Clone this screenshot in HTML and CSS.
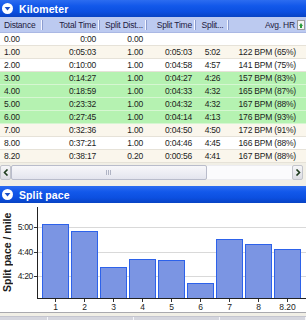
FILE: index.html
```html
<!DOCTYPE html>
<html>
	<head>
		<meta charset="UTF-8">
		<title>Kilometer</title>
		<link rel="stylesheet" href="styles.css">
	</head>
	<body>
		<div class="bar">
			<svg class="toggle" width="11" height="11" viewBox="0 0 11 11"><circle cx="5.5" cy="5.5" r="5.5" fill="#fff"/><path d="M2.6 4 L8.4 4 L5.5 7.6 Z" fill="#1a4fc8"/></svg>
			<span>Kilometer</span>
		</div>

		<table class="splits">
			<colgroup>
				<col style="width:43px"><col style="width:57px"><col style="width:47px">
				<col style="width:49px"><col style="width:33px"><col style="width:77px">
			</colgroup>
			<thead>
				<tr>
					<th class="l">Distance</th>
					<th>Total Time</th>
					<th>Split Dist...</th>
					<th>Split Time</th>
					<th class="c">Split...</th>
					<th class="hr">Avg. HR<svg class="cols" width="8" height="10" viewBox="0 0 8 10"><rect x="0.5" y="0.5" width="7" height="9" fill="#f4f4f4" stroke="#9a9a9a"/><path d="M2 6 L4 3 L6 6 Z" fill="#2c9c3c"/><rect x="3" y="5.5" width="2" height="2.5" fill="#2c9c3c"/></svg></th>
				</tr>
			</thead>
			<tbody>
				<tr><td class="l">0.00</td><td>0:00</td><td>0.00</td><td></td><td class="c"></td><td class="hr"></td></tr>
				<tr class="alt"><td class="l">1.00</td><td>0:05:03</td><td>1.00</td><td>0:05:03</td><td class="c">5:02</td><td class="hr">122 BPM (65%)</td></tr>
				<tr><td class="l">2.00</td><td>0:10:00</td><td>1.00</td><td>0:04:58</td><td class="c">4:57</td><td class="hr">141 BPM (75%)</td></tr>
				<tr class="fast"><td class="l">3.00</td><td>0:14:27</td><td>1.00</td><td>0:04:27</td><td class="c">4:26</td><td class="hr">157 BPM (83%)</td></tr>
				<tr class="fast"><td class="l">4.00</td><td>0:18:59</td><td>1.00</td><td>0:04:33</td><td class="c">4:32</td><td class="hr">165 BPM (87%)</td></tr>
				<tr class="fast"><td class="l">5.00</td><td>0:23:32</td><td>1.00</td><td>0:04:32</td><td class="c">4:32</td><td class="hr">167 BPM (88%)</td></tr>
				<tr class="fast"><td class="l">6.00</td><td>0:27:45</td><td>1.00</td><td>0:04:14</td><td class="c">4:13</td><td class="hr">176 BPM (93%)</td></tr>
				<tr class="alt"><td class="l">7.00</td><td>0:32:36</td><td>1.00</td><td>0:04:50</td><td class="c">4:50</td><td class="hr">172 BPM (91%)</td></tr>
				<tr><td class="l">8.00</td><td>0:37:21</td><td>1.00</td><td>0:04:46</td><td class="c">4:45</td><td class="hr">166 BPM (88%)</td></tr>
				<tr class="alt"><td class="l">8.20</td><td>0:38:17</td><td>0.20</td><td>0:00:56</td><td class="c">4:41</td><td class="hr">167 BPM (88%)</td></tr>
			</tbody>
		</table>

		<div class="hscroll">
			<div class="btn"><svg width="6" height="7" viewBox="0 0 6 7"><path d="M4.5 0.5 L1.5 3.5 L4.5 6.5" fill="none" stroke="#1d3b1d" stroke-width="1.6"/></svg></div>
			<div class="thumb"><span class="grip"></span></div>
			<div class="track"></div>
			<div class="btn"><svg width="6" height="7" viewBox="0 0 6 7"><path d="M1.5 0.5 L4.5 3.5 L1.5 6.5" fill="none" stroke="#1d3b1d" stroke-width="1.6"/></svg></div>
		</div>

		<div class="bar second">
			<svg class="toggle" width="11" height="11" viewBox="0 0 11 11"><circle cx="5.5" cy="5.5" r="5.5" fill="#fff"/><path d="M2.6 4 L8.4 4 L5.5 7.6 Z" fill="#1a4fc8"/></svg>
			<span>Split pace</span>
		</div>

		<div class="chart">
			<div class="ylabel">Split pace / mile</div>
			<div class="yticks">
				<div class="ytick">5:00</div>
				<div class="ytick">4:40</div>
				<div class="ytick">4:20</div>
			</div>
			<div class="plotwrap">
				<div class="plot">
					<div class="col"><div class="pace" style="height:74px"></div></div>
					<div class="col"><div class="pace" style="height:67px"></div></div>
					<div class="col"><div class="pace" style="height:31px"></div></div>
					<div class="col"><div class="pace" style="height:39px"></div></div>
					<div class="col"><div class="pace" style="height:38px"></div></div>
					<div class="col"><div class="pace" style="height:15px"></div></div>
					<div class="col"><div class="pace" style="height:59px"></div></div>
					<div class="col"><div class="pace" style="height:54px"></div></div>
					<div class="col"><div class="pace" style="height:49px"></div></div>
				</div>
				<div class="xlabels">
					<div class="xl">1</div><div class="xl">2</div><div class="xl">3</div>
					<div class="xl">4</div><div class="xl">5</div><div class="xl">6</div>
					<div class="xl">7</div><div class="xl">8</div><div class="xl">8.20</div>
				</div>
			</div>
		</div>

		<div class="next">
			<div class="cell"></div><div class="cell"></div><div class="cell"></div><div class="cell"></div>
		</div>
	</body>
</html>
```

FILE: styles.css
```css
body {
    margin: 0;
    width: 306px; height: 320px;
    overflow: hidden;
    background: #f1efe6;
    font-family: "Liberation Sans", Arial, sans-serif;
    color: #1c1c1c;
}

.bar {
    height: 17px;
    display: flex; align-items: center; gap: 6px;
    padding-left: 2px;
    color: #fff;
    font-size: 10.5px; font-weight: bold;
    letter-spacing: 0.1px;
    background: linear-gradient(#2c6cf0, #1258ea 35%, #0c4fe0 70%, #0843c4);
}

.bar.second {
    margin-top: 6px;
}

.toggle {
    flex: none;
}

table.splits {
    width: 306px;
    table-layout: fixed;
    border-collapse: collapse;
    font-size: 8.5px;
    letter-spacing: -0.2px;
    background: #fff;
}

.splits th {
    height: 15px;
    padding: 0 4px 0 0;
    font-weight: normal;
    text-align: right;
    color: #1e2040;
    white-space: nowrap;
    overflow: hidden;
    background: linear-gradient(#f4f6ff, #f4f6ff) no-repeat right 1px center / 1px 10px,
                linear-gradient(#8c9dd0, #8c9dd0) no-repeat right center / 1px 10px,
                #bccaf0;
    border-bottom: 1px solid #aab8e4;
}

.splits th.hr {
    padding-right: 1px;
    background: #bccaf0;
}

.splits th .cols {
    vertical-align: -2px;
    margin-left: 2px;
}

.splits td {
    height: 12px;
    padding: 0 4px 0 0;
    text-align: right;
    white-space: nowrap;
    border-bottom: 1px solid #e6e2d8;
}

.splits .l { text-align: left; padding: 0 0 0 4px; }
.splits .c { text-align: center; padding: 0; }
.splits td.hr { padding-right: 10px; }

.splits tr.alt td { background: #faf6ec; }
.splits tr.fast td { background: #b5f2b1; border-bottom-color: #d6f6d2; }

.hscroll {
    margin-top: 2px;
    height: 15px;
    display: flex;
    padding-right: 3px;
}

.hscroll .btn {
    width: 11px;
    box-sizing: border-box;
    border: 1px solid #c2c4cc;
    border-radius: 2px;
    background: linear-gradient(#f6f6f8, #dcdde4);
    display: flex; align-items: center; justify-content: center;
}

.hscroll .thumb {
    width: 196px;
    box-sizing: border-box;
    border: 1px solid #b9bccb;
    border-radius: 2px;
    background: linear-gradient(#f7f7fa, #e4e5ee);
    display: flex; align-items: center; justify-content: center;
}

.grip {
    width: 6px; height: 5px;
    background: repeating-linear-gradient(90deg, #b0b4c4 0 1px, transparent 1px 2px);
}

.hscroll .track {
    flex: 1;
    background: #fbfbfd;
    border-top: 1px solid #ececf0;
    border-bottom: 1px solid #ececf0;
}

.chart {
    height: 110px;
    box-sizing: border-box;
    padding-top: 4px;
    background: #fff;
    display: flex;
    border-bottom: 1px solid #a9a9ae;
}

.ylabel {
    width: 15px; height: 91px;
    writing-mode: vertical-rl;
    transform: rotate(180deg);
    text-align: center;
    font-size: 10.5px; font-weight: bold;
    line-height: 15px;
    white-space: nowrap;
}

.yticks {
    width: 22px; height: 91px;
    display: flex; flex-direction: column; gap: 12.5px;
    padding-top: 14px;
    box-sizing: border-box;
}

.ytick {
    height: 12px; line-height: 12px;
    font-size: 8.5px;
    text-align: right;
    letter-spacing: -0.3px;
}

.ytick::after {
    content: "";
    display: inline-block;
    width: 3px; height: 1px;
    margin-left: 1px;
    background: #333;
    vertical-align: middle;
}

.plotwrap {
    flex: 1;
    display: flex; flex-direction: column;
}

.plot {
    height: 91px;
    border-left: 1px solid #222;
    border-bottom: 1px solid #222;
    padding-left: 3px;
    display: flex; align-items: flex-end;
    background: linear-gradient(#d9d9d9, #d9d9d9) no-repeat 0 20px / 100% 1px,
                linear-gradient(#d9d9d9, #d9d9d9) no-repeat 0 45px / 100% 1px,
                linear-gradient(#d9d9d9, #d9d9d9) no-repeat 0 69px / 100% 1px;
}

.col {
    width: 29px;
    display: flex; justify-content: center;
}

.pace {
    width: 27px;
    box-sizing: border-box;
    border: 1px solid #2d62ea;
    border-bottom: 0;
    background: #7b95e3;
}

.xlabels {
    display: flex;
    padding-left: 4px;
}

.xl {
    width: 29px;
    font-size: 8.5px;
    line-height: 10px;
    text-align: center;
}

.xl::before {
    content: "";
    display: block;
    width: 1px; height: 3px;
    margin: 0 auto;
    background: #333;
}

.next {
    margin-top: 3px;
    height: 4px;
    display: flex;
    background: #d5d6de;
    border-top: 1px solid #c4c5cf;
}

.next .cell {
    width: 90px;
    border-right: 1px solid #f6f6fa;
}

.next .cell:first-child {
    width: 50px;
}
```
